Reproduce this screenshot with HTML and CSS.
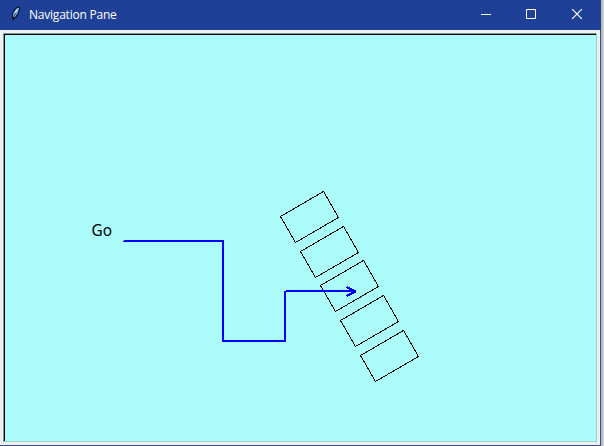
FILE: index.html
```html
<!DOCTYPE html>
<html lang="en">
<head>
<meta charset="utf-8">
<title>Navigation Pane</title>
<link rel="stylesheet" href="styles.css">
</head>
<body>
<div class="window">
  <header class="titlebar">
    <svg class="feather" width="16" height="16" viewBox="0 0 16 16">
      <path d="M4.5 15.8L5 13.5L3.8 11L4.2 7L6.5 3L9 .8L11.8 .4L12 3.5L10.5 8L7.8 12L5.8 13.2Z" fill="#071022"/>
      <path d="M4.8 10.5L5.4 7L7.6 3.4L10 1.4L11.2 2.2L9.8 6.8L6.8 11.5Z" fill="#7db4e8"/>
      <path d="M8 6.5L6.4 9.6L5 14.5" fill="none" stroke="#0b1830" stroke-width=".8"/>
      <path d="M9.4 2.8L7 7.4" stroke="#c8e6fa" stroke-width=".9"/>
    </svg>
    <h1 class="title">Navigation Pane</h1>
    <div class="controls">
      <svg width="12" height="12" viewBox="0 0 12 12"><path d="M1 6.5H11" stroke="#fff"/></svg>
      <svg width="12" height="12" viewBox="0 0 12 12"><path d="M1.5 1.5H10.5V10.5H1.5Z" fill="none" stroke="#fff"/></svg>
      <svg class="close" width="12" height="12" viewBox="0 0 12 12"><path d="M1.2 1.2L10.8 10.8M10.8 1.2L1.2 10.8" stroke="#fff" stroke-width="1.2"/></svg>
    </div>
  </header>
  <main class="client">
    <div class="canvas">
      <svg class="drawing" width="592" height="407" viewBox="4 34 592 407">
        <g class="boxes">
          <path d="M280.5 216.5L323.5 191.5L338.5 217.5L295.5 242.5Z"/>
          <path d="M300.5 251.5L343.5 226.5L358.5 252.5L315.5 277.5Z"/>
          <path d="M320.5 285.5L363.5 260.5L378.5 286.5L335.5 311.5Z"/>
          <path d="M340.5 320.5L383.5 295.5L398.5 321.5L355.5 346.5Z"/>
          <path d="M360.5 355.5L403.5 330.5L418.5 356.5L375.5 381.5Z"/>
        </g>
        <path class="route" d="M124 241H223V341H285V291M286 291H355"/>
        <path class="route tail" d="M123 241.5H124"/>
        <path class="route head" d="M346.5 287L355 291.5L346.5 296"/>
        <text class="label" x="91.5" y="236" textLength="20.5" lengthAdjust="spacingAndGlyphs">Go</text>
      </svg>
    </div>
  </main>
</div>
</body>
</html>
```
FILE: styles.css
```css
body {
  margin: 0;
  height: 446px;
  overflow: hidden;
  background: linear-gradient(to right, #aaabad 601px, #b2b3b5 601px, #d2d3d5 604px);
  font-family: "Open Sans", "Noto Sans", sans-serif;
}

.window {
  box-sizing: border-box;
  width: 601px;
  height: 446px;
  display: flex;
  flex-direction: column;
  border: solid #3450a0;
  border-width: 0 1px 1px 0;
  background: #f0f0f0;
}

.titlebar {
  flex: none;
  height: 30px;
  margin-right: -1px;
  padding: 0 18px 0 8px;
  box-sizing: border-box;
  display: flex;
  align-items: center;
  background: #1e4097;
  color: #fff;
}

.feather {
  margin-top: -2px;
}

.title {
  margin: 0 0 0 5px;
  font: 400 12px/30px "Open Sans", sans-serif;
  letter-spacing: -0.22px;
}

.controls {
  margin-left: auto;
  margin-top: -2px;
  display: flex;
  gap: 33px;
}

.close {
  margin-left: 1px;
}

.client {
  flex: 1;
  display: flex;
  padding: 3px;
}

.canvas {
  box-sizing: border-box;
  width: 594px;
  height: 409px;
  border: 1px solid;
  border-color: #729f9e #93d3d2 #93d3d2 #729f9e;
  background: #abfbfb;
  box-shadow: inset 1px 1px #000;
}

.drawing {
  display: block;
}

.boxes path {
  fill: none;
  stroke: #000;
  stroke-width: 1;
  shape-rendering: crispEdges;
}

.route {
  fill: none;
  stroke: #00f;
  stroke-width: 2;
  shape-rendering: crispEdges;
}

.tail {
  stroke-width: 1;
}

.head {
  stroke-width: 2.4;
  stroke-linejoin: round;
}

.label {
  font: 16px "Noto Sans", sans-serif;
  fill: #000;
}
```
